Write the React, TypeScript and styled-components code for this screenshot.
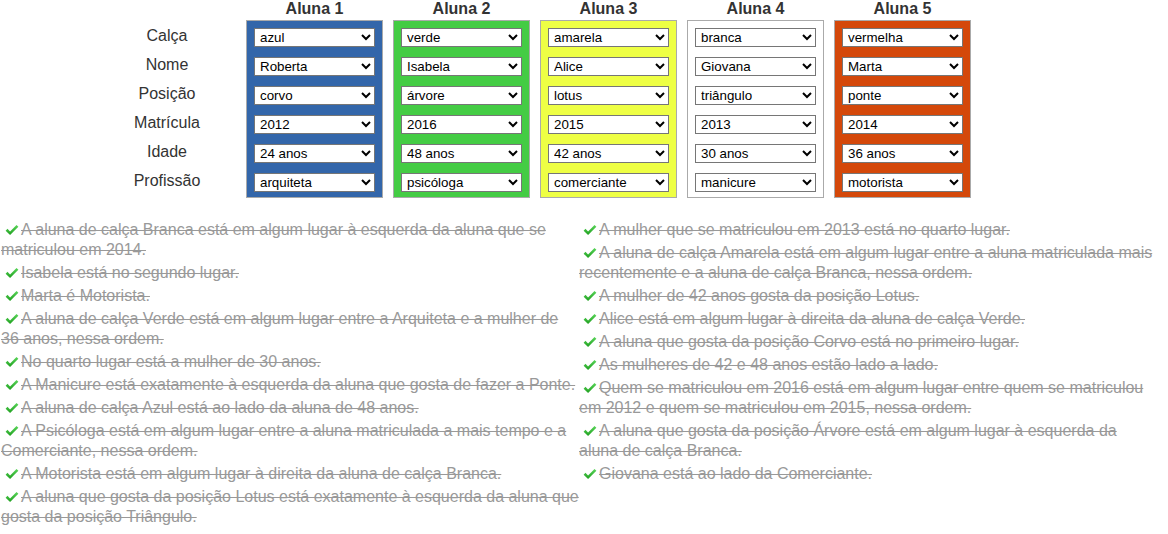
import React from "react";
import styled, { createGlobalStyle } from "styled-components";

const GlobalStyle = createGlobalStyle`
  html, body { margin: 0; padding: 0; background: #fff; }
  body { font-family: "Liberation Sans", Arial, sans-serif; color: #333; }
`;

type Student = {
  title: string;
  bg: string;
  values: string[];
};

const rowLabels = ["Calça", "Nome", "Posição", "Matrícula", "Idade", "Profissão"];

const options: string[][] = [
  ["", "azul", "verde", "amarela", "branca", "vermelha"],
  ["", "Roberta", "Isabela", "Alice", "Giovana", "Marta"],
  ["", "corvo", "árvore", "lotus", "triângulo", "ponte"],
  ["", "2012", "2016", "2015", "2013", "2014"],
  ["", "24 anos", "48 anos", "42 anos", "30 anos", "36 anos"],
  ["", "arquiteta", "psicóloga", "comerciante", "manicure", "motorista"],
];

const students: Student[] = [
  { title: "Aluna 1", bg: "#3366aa", values: ["azul", "Roberta", "corvo", "2012", "24 anos", "arquiteta"] },
  { title: "Aluna 2", bg: "#44cc44", values: ["verde", "Isabela", "árvore", "2016", "48 anos", "psicóloga"] },
  { title: "Aluna 3", bg: "#eeff44", values: ["amarela", "Alice", "lotus", "2015", "42 anos", "comerciante"] },
  { title: "Aluna 4", bg: "#ffffff", values: ["branca", "Giovana", "triângulo", "2013", "30 anos", "manicure"] },
  { title: "Aluna 5", bg: "#d4480a", values: ["vermelha", "Marta", "ponte", "2014", "36 anos", "motorista"] },
];

const leftClues = [
  "A aluna de calça Branca está em algum lugar à esquerda da aluna que se matriculou em 2014.",
  "Isabela está no segundo lugar.",
  "Marta é Motorista.",
  "A aluna de calça Verde está em algum lugar entre a Arquiteta e a mulher de 36 anos, nessa ordem.",
  "No quarto lugar está a mulher de 30 anos.",
  "A Manicure está exatamente à esquerda da aluna que gosta de fazer a Ponte.",
  "A aluna de calça Azul está ao lado da aluna de 48 anos.",
  "A Psicóloga está em algum lugar entre a aluna matriculada a mais tempo e a Comerciante, nessa ordem.",
  "A Motorista está em algum lugar à direita da aluna de calça Branca.",
  "A aluna que gosta da posição Lotus está exatamente à esquerda da aluna que gosta da posição Triângulo.",
];

const rightClues = [
  "A mulher que se matriculou em 2013 está no quarto lugar.",
  "A aluna de calça Amarela está em algum lugar entre a aluna matriculada mais recentemente e a aluna de calça Branca, nessa ordem.",
  "A mulher de 42 anos gosta da posição Lotus.",
  "Alice está em algum lugar à direita da aluna de calça Verde.",
  "A aluna que gosta da posição Corvo está no primeiro lugar.",
  "As mulheres de 42 e 48 anos estão lado a lado.",
  "Quem se matriculou em 2016 está em algum lugar entre quem se matriculou em 2012 e quem se matriculou em 2015, nessa ordem.",
  "A aluna que gosta da posição Árvore está em algum lugar à esquerda da aluna de calça Branca.",
  "Giovana está ao lado da Comerciante.",
];

const Page = styled.div`
  width: 1168px;
`;

const Board = styled.div`
  display: flex;
  align-items: flex-start;
  padding-left: 120px;
  gap: 10px;
`;

const LabelColumn = styled.div`
  width: 94px;
  margin-right: 22px;
  padding-top: 26px;
  display: flex;
  flex-direction: column;
  gap: 10px;
`;

const Label = styled.div`
  height: 19px;
  line-height: 19px;
  font-size: 16px;
  text-align: center;
  color: #333;
`;

const StudentColumn = styled.div`
  display: flex;
  flex-direction: column;
  width: 137px;
`;

const Header = styled.div`
  height: 20px;
  line-height: 18px;
  font-size: 16px;
  font-weight: bold;
  text-align: center;
  color: #333;
`;

const ColorBox = styled.div<{ $bg: string }>`
  box-sizing: border-box;
  background: ${(p) => p.$bg};
  border: 1px solid #aaa;
  padding: 7px 7px 5px 7px;
  display: flex;
  flex-direction: column;
  gap: 10px;
`;

const Select = styled.select`
  box-sizing: border-box;
  width: 121px;
  height: 19px;
  font-family: "Liberation Sans", Arial, sans-serif;
  font-size: 13.333px;
  color: #000;
  background-color: #fff;
  border: 1px solid #767676;
  border-radius: 0;
  padding: 0 0 0 1px;
  margin: 0;
`;

const Clues = styled.div`
  display: flex;
  margin-top: 22px;
  padding-left: 1px;
`;

const ClueColumn = styled.ul<{ $w: number }>`
  list-style: none;
  margin: 0;
  padding: 0;
  width: ${(p) => p.$w}px;
  display: flex;
  flex-direction: column;
  gap: 3px;
`;

const Clue = styled.li`
  font-size: 16px;
  line-height: 20px;
  color: #999;
  text-decoration: line-through;
`;

const Check = styled.svg`
  width: 14px;
  height: 12px;
  margin: 0 2px 0 4px;
  vertical-align: -1px;
`;

const CheckIcon = () => (
  <Check viewBox="0 0 15 13" aria-hidden="true">
    <defs>
      <linearGradient id="chk" x1="0" y1="0" x2="0" y2="1">
        <stop offset="0" stopColor="#5ad65a" />
        <stop offset="1" stopColor="#1f9f1f" />
      </linearGradient>
    </defs>
    <path d="M0.6 7.2 L2.6 5.2 L5.4 8 L12.4 1 L14.4 3 L5.4 12 Z" fill="url(#chk)" />
  </Check>
);

export default function App() {
  return (
    <Page>
      <GlobalStyle />
      <Board>
        <LabelColumn>
          {rowLabels.map((l) => (
            <Label key={l}>{l}</Label>
          ))}
        </LabelColumn>
        {students.map((s) => (
          <StudentColumn key={s.title}>
            <Header>{s.title}</Header>
            <ColorBox $bg={s.bg}>
              {s.values.map((v, i) => (
                <Select key={i} defaultValue={v}>
                  {options[i].map((o) => (
                    <option key={o} value={o}>
                      {o}
                    </option>
                  ))}
                </Select>
              ))}
            </ColorBox>
          </StudentColumn>
        ))}
      </Board>
      <Clues>
        <ClueColumn $w={578}>
          {leftClues.map((c) => (
            <Clue key={c}>
              <CheckIcon />
              {c}
            </Clue>
          ))}
        </ClueColumn>
        <ClueColumn $w={578}>
          {rightClues.map((c) => (
            <Clue key={c}>
              <CheckIcon />
              {c}
            </Clue>
          ))}
        </ClueColumn>
      </Clues>
    </Page>
  );
}
